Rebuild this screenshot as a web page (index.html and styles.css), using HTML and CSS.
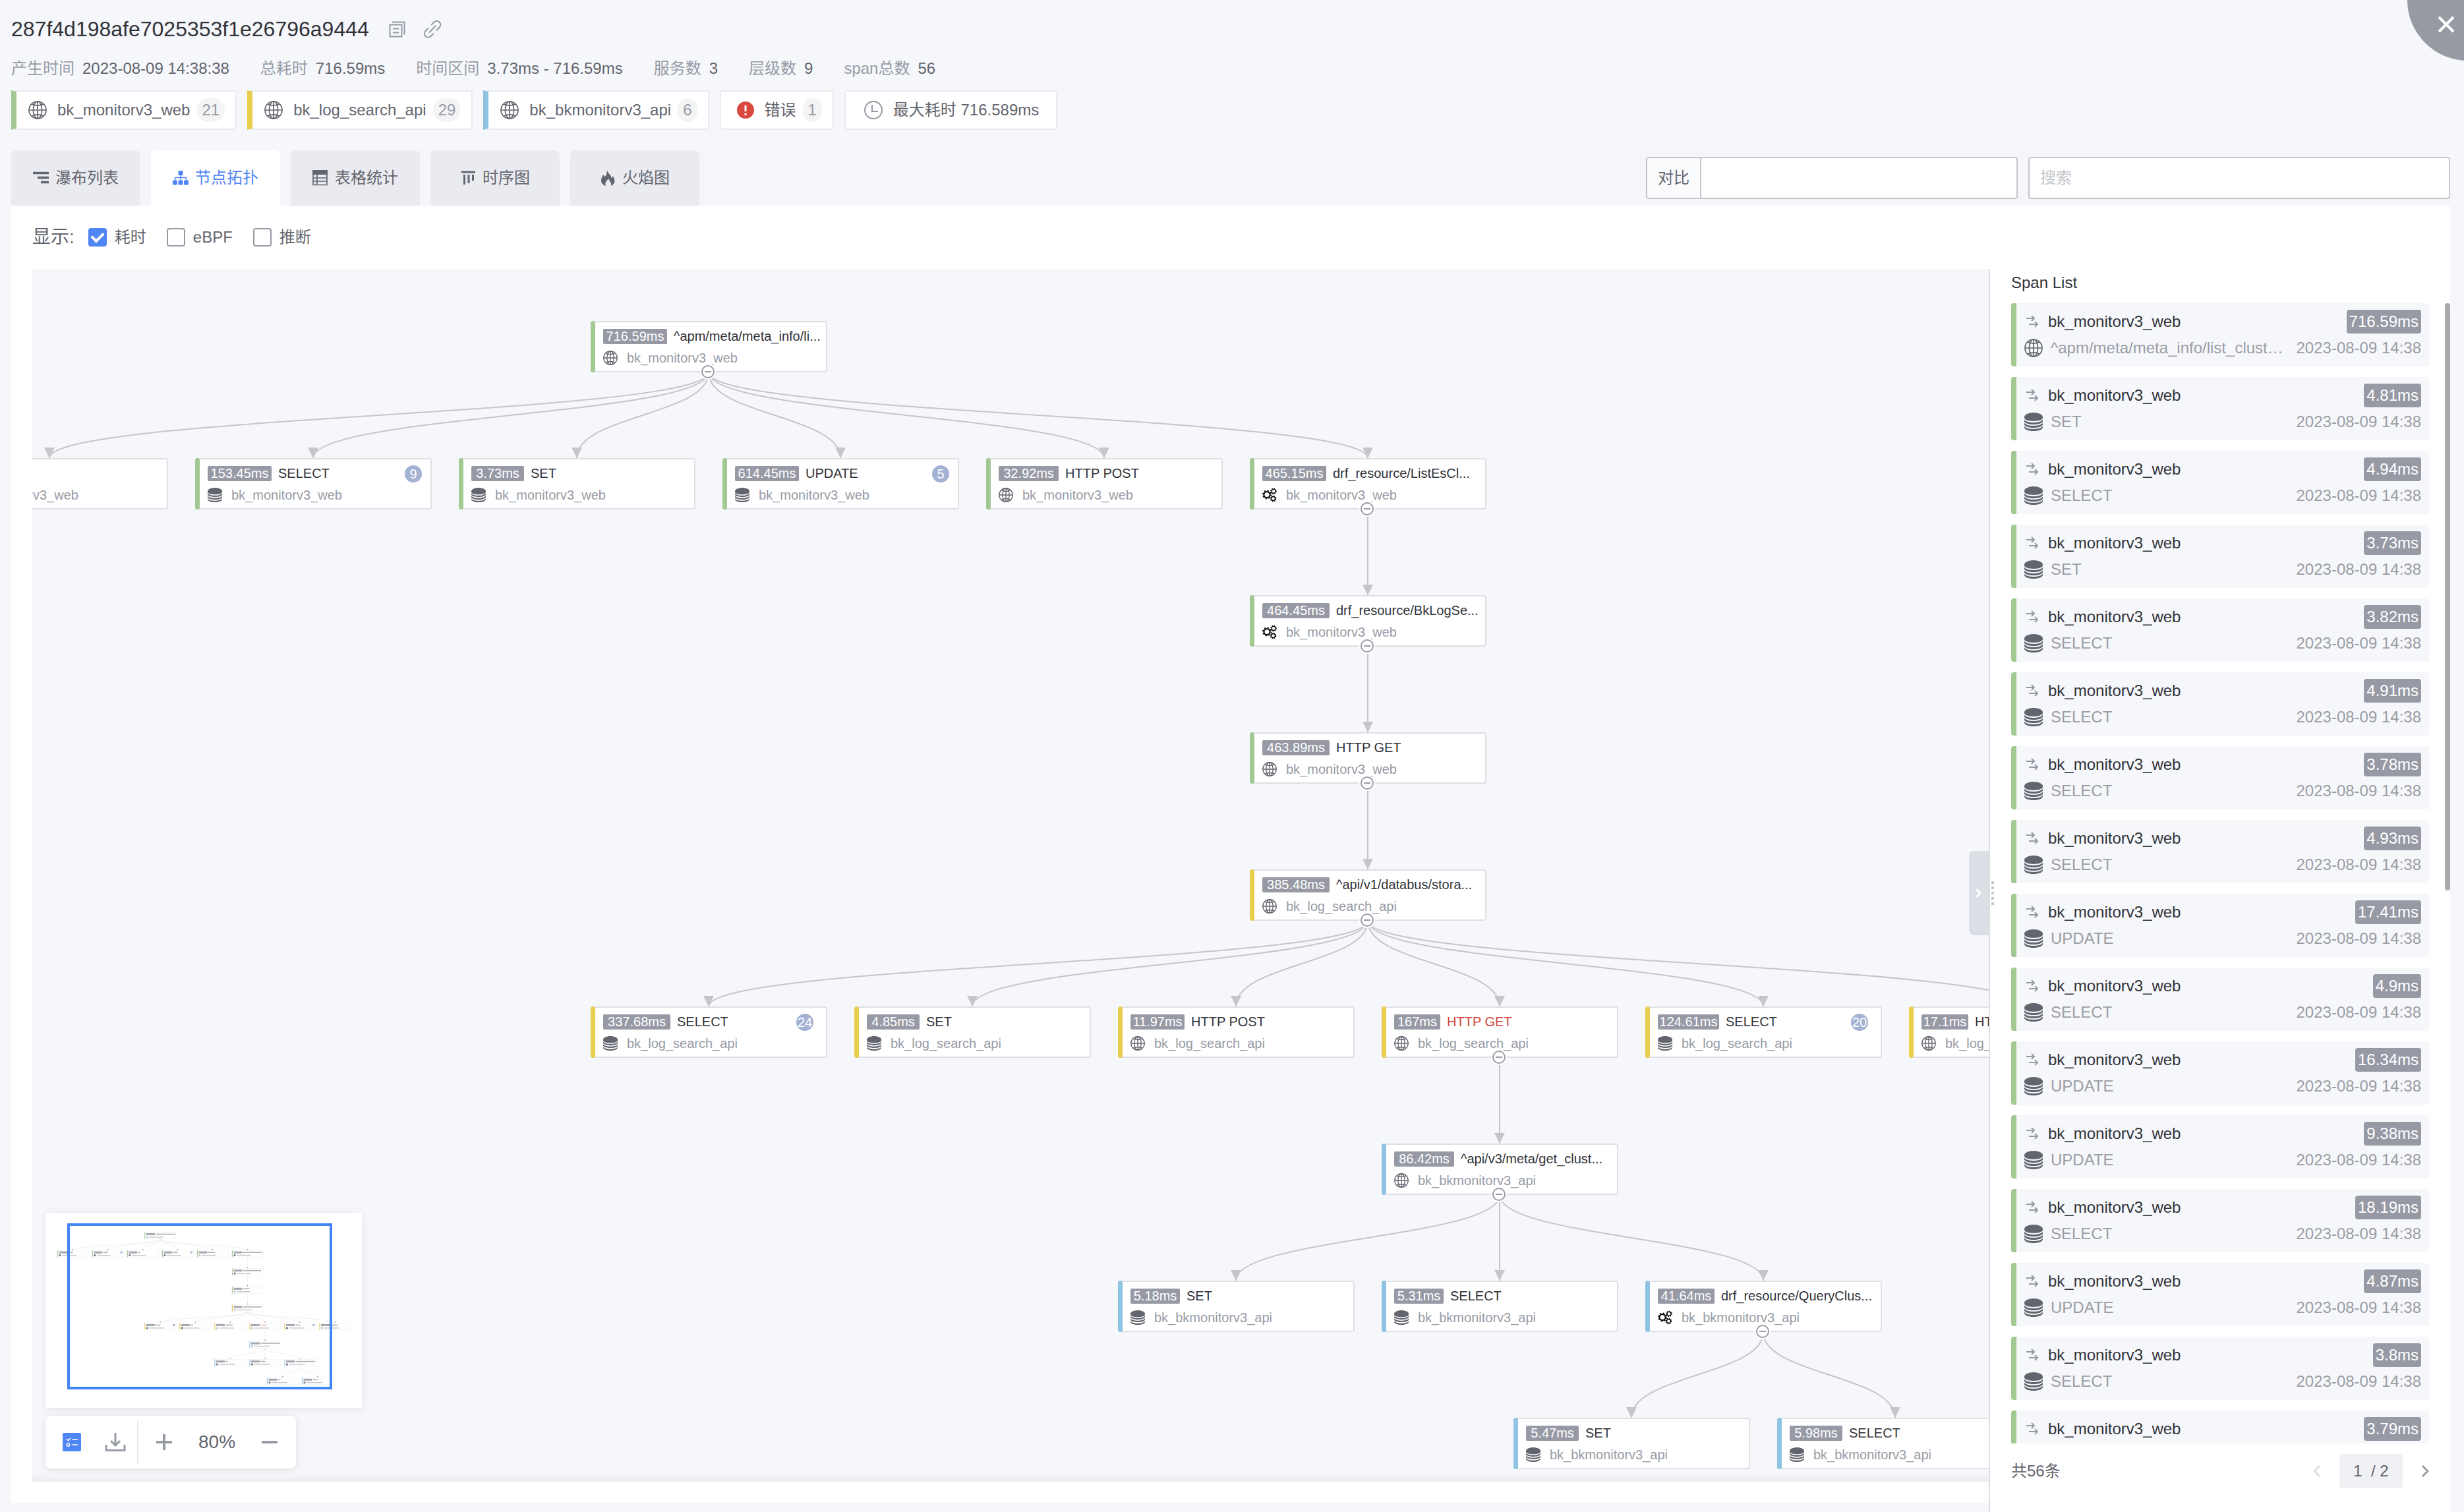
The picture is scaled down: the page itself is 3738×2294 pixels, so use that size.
FILE: index.html
```html
<!DOCTYPE html>
<html lang="zh-CN">
<head>
<meta charset="utf-8">
<title>Trace 详情</title>
<link rel="stylesheet" href="styles.css">
</head>
<body>
<svg class="sprite" aria-hidden="true">
  <symbol id="i-globe" viewBox="0 0 28 28"><g fill="none" stroke="currentColor" stroke-width="1.700"><circle cx="14" cy="14" r="13"/><ellipse cx="14" cy="14" rx="6.600" ry="13"/><path d="M14 1v26M1 14h26M5 4.800c5 3 13 3 18 0M5 23.200c5-3 13-3 18 0"/></g></symbol>
  <symbol id="i-db" viewBox="0 0 28 28"><g fill="currentColor"><path d="M14 0C6.300 0 0 3 0 6.600v1.200c0 3.300 6.300 5.200 14 5.200s14-1.900 14-5.200V6.600C28 3 21.700 0 14 0z"/><path d="M0 10.400c2.600 3.400 8 4.600 14 4.600s11.400-1.200 14-4.600v3.400c-2.400 3-8 4.200-14 4.200S2.400 16.800 0 13.800z"/><path d="M0 15.600c2.600 3.400 8 4.400 14 4.400s11.400-1 14-4.400v3.200c-2.400 3-8 4.200-14 4.200S2.400 21.800 0 18.800z"/><path d="M0 20.600c2.600 3.400 8 4.400 14 4.400s11.400-1 14-4.400v1.600c0 3.400-6.300 5.800-14 5.800S0 25.600 0 22.200z"/></g></symbol>
  <symbol id="i-gears" viewBox="0 0 22 22"><g fill="none" stroke="#000"><circle cx="7" cy="10.500" r="4.600" stroke-width="2"/><circle cx="7" cy="10.500" r="6.200" stroke-width="1.600" stroke-dasharray="2.200 2.670"/><circle cx="17" cy="5.300" r="3" stroke-width="1.300"/><circle cx="17" cy="5.300" r="4.200" stroke-width="1.300" stroke-dasharray="1.600 1.699"/><circle cx="16.500" cy="16.500" r="3" stroke-width="1.300"/><circle cx="16.500" cy="16.500" r="4.200" stroke-width="1.300" stroke-dasharray="1.600 1.699"/></g></symbol>
  <symbol id="i-call" viewBox="0 0 18 20"><path d="M0 5h12M8 1l4 4-4 4M4 14h13M13 10l4 4-4 4" fill="none" stroke="currentColor" stroke-width="2"/></symbol>
</svg>

<div class="page">
  <button class="close" aria-label="关闭"><svg viewBox="0 0 26 26"><path d="M2 2l22 22M24 2L2 24" fill="none" stroke="#fff" stroke-width="4"/></svg></button>

  <header class="header">
    <div class="title-row">
      <h1>287f4d198afe7025353f1e26796a9444</h1>
      <button class="icon-btn" aria-label="复制"><svg viewBox="0 0 28 28" width="28" height="28"><path d="M8 3.500h18.500V22.500M4.500 7.500h18v18h-18zM9 13.500h9.500M9 19.500h9.500" fill="none" stroke="currentColor" stroke-width="2"/></svg></button>
      <button class="icon-btn" aria-label="链接"><svg viewBox="0 0 28 28" width="28" height="28"><path d="M12 8l4.500-4.500c2.400-2.400 5.600-2.400 8 0s2.400 5.600 0 8L20 16.500M16 20.500L11.500 25c-2.400 2.400-5.600 2.400-8 0s-2.400-5.600 0-8L8 12.500M9 19.500L19 9" fill="none" stroke="currentColor" stroke-width="2"/></svg></button>
    </div>
    <dl class="info">
      <div><dt>产生时间</dt><dd>2023-08-09 14:38:38</dd></div>
      <div><dt>总耗时</dt><dd>716.59ms</dd></div>
      <div><dt>时间区间</dt><dd>3.73ms - 716.59ms</dd></div>
      <div><dt>服务数</dt><dd>3</dd></div>
      <div><dt>层级数</dt><dd>9</dd></div>
      <div><dt>span总数</dt><dd>56</dd></div>
    </dl>
    <div class="chips">
      <button class="chip service green"><svg class="ico"><use href="#i-globe"/></svg>bk_monitorv3_web<span class="num">21</span></button>
      <button class="chip service yellow"><svg class="ico"><use href="#i-globe"/></svg>bk_log_search_api<span class="num">29</span></button>
      <button class="chip service blue"><svg class="ico"><use href="#i-globe"/></svg>bk_bkmonitorv3_api<span class="num">6</span></button>
      <button class="chip error"><svg viewBox="0 0 26 26" width="26" height="26"><circle cx="13" cy="13" r="13" fill="#d9473f"/><path d="M13 6v9M13 18v3" stroke="#fff" stroke-width="3"/></svg>错误<span class="num">1</span></button>
      <button class="chip longest"><svg class="clock" viewBox="0 0 28 28" width="28" height="28"><circle cx="14" cy="14" r="13" fill="none" stroke="currentColor" stroke-width="2"/><path d="M12 6v10h9" fill="none" stroke="currentColor" stroke-width="2"/></svg>最大耗时 716.589ms</button>
    </div>
  </header>

  <div class="tabbar">
    <nav class="tabs">
      <button class="tab"><svg viewBox="0 0 24 24" width="24" height="24"><path d="M0 4.500h24M7 11.500h17M12 18.500h12" stroke="currentColor" stroke-width="3.500"/></svg>瀑布列表</button>
      <button class="tab active"><svg viewBox="0 0 24 24" width="24" height="24"><g fill="currentColor"><rect x="8.500" y="1" width="7" height="7" rx="1.500"/><rect x="0" y="15.500" width="7" height="7" rx="1.500"/><rect x="8.500" y="15.500" width="7" height="7" rx="1.500"/><rect x="17" y="15.500" width="7" height="7" rx="1.500"/></g><path d="M12 8v8M3.500 16v-4.500h17V16" fill="none" stroke="currentColor" stroke-width="1.500"/></svg>节点拓扑</button>
      <button class="tab"><svg viewBox="0 0 24 24" width="24" height="24"><path d="M0 0h23v7H0z" fill="currentColor"/><path d="M1 6v16.500h21V6M1 12h21M1 17h21M7 6v16" fill="none" stroke="currentColor" stroke-width="1.700"/></svg>表格统计</button>
      <button class="tab"><svg viewBox="0 0 24 24" width="24" height="24"><path d="M2 3h21" stroke="currentColor" stroke-width="3"/><path d="M6.500 7v15M13 7v13M19.500 7v9" stroke="currentColor" stroke-width="3"/></svg>时序图</button>
      <button class="tab"><svg viewBox="0 0 24 24" width="24" height="24"><path d="M11 0c1 5 7 8 7 13l2-4c2 4 3 7 2 10-1 2-3 4-5 5 1-5-2-7-4-11-3 4-6 6-4 11-4-1-7-4-7-8 0-4 2-6 3-9l3 3c2-3 3-6 3-10z" fill="currentColor"/></svg>火焰图</button>
    </nav>
    <div class="tools">
      <div class="compare"><label for="cmp">对比</label><input id="cmp" type="text"></div>
      <input class="search" type="text" placeholder="搜索" aria-label="搜索">
    </div>
  </div>

  <main class="panel">
    <div class="filters">
      <span class="filters-title">显示:</span>
      <label><input type="checkbox" checked>耗时</label>
      <label><input type="checkbox">eBPF</label>
      <label><input type="checkbox">推断</label>
    </div>
    <div class="content">
      <section class="graph-col">
        <div class="canvas" id="canvas">
          <svg class="edges" id="edges"></svg>
          <button class="collapse" aria-label="收起"><svg viewBox="0 0 10 16" width="10" height="16"><path d="M1 2l6 6-6 6" fill="none" stroke="#fff" stroke-width="3"/></svg></button>
          <div class="overlay">
            <div class="minimap"><svg id="minimap" width="480" height="296"></svg></div>
            <div class="toolbar">
              <button aria-label="图例"><svg viewBox="0 0 28 28" width="28" height="28"><rect width="28" height="28" rx="2" fill="#5085f5"/><g fill="none" stroke="#fff" stroke-width="1.600"><path d="M6 9l2.500 2.500L12 8M14.500 10H23M14.500 18H23"/><circle cx="8.500" cy="18" r="2.200"/></g></svg></button>
              <button aria-label="下载"><svg viewBox="0 0 32 28" width="32" height="28"><path d="M2 18v8.500h28V18M16 0v18M9 12l7 7 7-7" fill="none" stroke="currentColor" stroke-width="3"/></svg></button>
              <span class="sep"></span>
              <button aria-label="放大"><svg viewBox="0 0 24 24" width="24" height="24"><path d="M0 12h24M12 0v24" stroke="currentColor" stroke-width="4"/></svg></button>
              <span class="zoom">80%</span>
              <button aria-label="缩小"><svg viewBox="0 0 24 24" width="24" height="24"><path d="M0 12h24" stroke="currentColor" stroke-width="4"/></svg></button>
            </div>
          </div>
        </div>
      </section>
      <aside class="side">
        <div class="grip"><i></i><i></i><i></i><i></i><i></i></div>
        <h2>Span List</h2>
        <div class="list-wrap">
          <ul class="list" id="spans"></ul>
          <div class="scrollbar"></div>
        </div>
        <footer class="pager">
          <span>共56条</span>
          <button class="prev" aria-label="上一页"><svg viewBox="0 0 12 20" width="12" height="20"><path d="M10 2L2 10l8 8" fill="none" stroke="currentColor" stroke-width="3"/></svg></button>
          <span class="current">1&nbsp; / 2</span>
          <button class="next" aria-label="下一页"><svg viewBox="0 0 12 20" width="12" height="20"><path d="M2 2l8 8-8 8" fill="none" stroke="currentColor" stroke-width="3"/></svg></button>
        </footer>
      </aside>
    </div>
  </main>
</div>
<script src="app.js"></script>
</body>
</html>
```
FILE: styles.css
```css
* { box-sizing: border-box; }
body {
  margin: 0;
  background: #f5f7fb;
  color: #63656e;
  font: 24px/36px "Liberation Sans", "Noto Sans CJK SC", sans-serif;
}
button {
  margin: 0;
  padding: 0;
  border: 0;
  background: none;
  color: inherit;
  font: inherit;
  cursor: pointer;
}
svg { display: block; flex: none; }
.sprite { position: absolute; width: 0; height: 0; }
.page {
  position: relative;
  display: flex;
  flex-direction: column;
  height: 100vh;
  overflow: hidden;
}
.green { --bar: #a3c992; }
.yellow { --bar: #e9cd4c; }
.blue { --bar: #8fc3e3; }

.close {
  position: absolute;
  top: -92px;
  right: -98px;
  width: 184px;
  height: 184px;
  border-radius: 50%;
  background: #979aa3;
}
.close svg { position: absolute; left: 46px; top: 116px; width: 26px; height: 26px; }

/* header */
.header { padding: 22px 17px 31px; }
.title-row { display: flex; align-items: center; gap: 27px; height: 44px; }
h1 { margin: 0; color: #313238; font-size: 32px; font-weight: 400; line-height: 44px; }
.icon-btn { color: #979ba5; }
.info { display: flex; gap: 47px; margin: 20px 0 15px; }
.info div { display: flex; gap: 12px; }
.info dt { color: #979ba5; }
.info dd { margin: 0; }
.chips { display: flex; gap: 16px; }
.chip {
  display: flex;
  align-items: center;
  height: 60px;
  padding: 0 16px 0 24px;
  border: 2px solid #eaebf0;
  border-radius: 4px;
  background: #fff;
}
.chip.service { padding: 0 16px 0 18px; border-left: 8px solid var(--bar); border-radius: 0 4px 4px 0; }
.chip svg { margin-right: 16px; }
.chip.longest { padding: 0 26px 0 28px; }
.clock { color: #979ba5; }
.ico { width: 28px; height: 28px; }
.num {
  margin-left: 10px;
  padding: 0 8px;
  border-radius: 18px;
  background: #f4f4f5;
  color: #979ba5;
}

/* tabs */
.tabbar {
  display: flex;
  justify-content: space-between;
  align-items: center;
  margin: 0 21px 0 17px;
  background: #f4f6fa;
}
.tabs { display: flex; gap: 16px; }
.tab {
  display: flex;
  justify-content: center;
  align-items: center;
  gap: 10px;
  width: 196px;
  height: 84px;
  border-radius: 8px 8px 0 0;
  background: #eaebf0;
}
.tab.active { background: #fff; color: #5085f5; }
.tools { display: flex; gap: 16px; }
.compare, .search {
  height: 64px;
  border: 2px solid #c4c6cc;
  border-radius: 4px;
  background: #fff;
}
.compare { display: flex; width: 564px; overflow: hidden; }
.compare label {
  padding: 0 16px;
  border-right: 2px solid #c4c6cc;
  background: #fafbfd;
  line-height: 60px;
}
.compare input { flex: 1; min-width: 0; border: 0; outline: 0; font: inherit; }
.search { width: 640px; padding: 0 16px; font: inherit; }
.search::placeholder { color: #c4c6cc; }

/* body */
.panel { display: flex; flex-direction: column; flex: 1; min-height: 0; margin: 0 21px 0 17px; }
.filters {
  display: flex;
  align-items: center;
  gap: 31px;
  height: 96px;
  padding-left: 32px;
  background: #fff;
}
.filters-title { margin-right: -10px; font-size: 28px; }
.filters label { display: flex; align-items: center; gap: 12px; }
.filters input {
  display: grid;
  place-items: center;
  width: 28px;
  height: 28px;
  margin: 0;
  border: 2px solid #979ba5;
  border-radius: 4px;
  background: #fff;
  appearance: none;
}
.filters input:checked { border-color: #5085f5; background: #5085f5; }
.filters input:checked::after {
  width: 8px;
  height: 14px;
  margin-bottom: 4px;
  border: solid #fff;
  border-width: 0 4px 4px 0;
  content: "";
  transform: rotate(45deg);
}
.content { display: flex; flex: 1; min-height: 0; }
.graph-col { display: flex; flex: 1; min-width: 0; margin-bottom: 14px; padding: 0 0 32px 32px; background: #fff; }
.canvas {
  position: relative;
  flex: 1;
  overflow: hidden;
  background: #f5f7fb;
  box-shadow: inset 0 -14px 14px -12px rgba(0, 0, 0, .08);
}
.edges { position: absolute; inset: 0; width: 100%; height: 100%; }
.edges path, .mini-edge { fill: none; stroke: #c4c6cc; stroke-width: 2; }
.edges polygon { fill: #c4c6cc; }

.node {
  position: absolute;
  width: 359px;
  height: 78px;
  padding: 10px 13px 0 17px;
  border: 2px solid #dfe0e6;
  border-radius: 4px;
  background: #fff;
  font-size: 20px;
  line-height: 23px;
  white-space: nowrap;
}
.node::before {
  position: absolute;
  inset: -2px auto -2px -2px;
  width: 7px;
  border-radius: 4px;
  background: var(--bar);
  content: "";
}
.node-head { display: flex; height: 23px; }
.node-time { flex: none; border-radius: 2px; background: #979aa5; color: #fff; text-align: center; }
.node-name { margin-left: 10px; color: #313238; }
.node-name.err { color: #d0463c; }
.node-count {
  width: 26px;
  height: 26px;
  margin: -1px 0 0 auto;
  border-radius: 50%;
  background: #a3b1d3;
  color: #fff;
  line-height: 26px;
  text-align: center;
}
.node-count.wide { margin-right: 6px; }
.node-svc { display: flex; align-items: center; gap: 14px; height: 22px; margin-top: 10px; color: #979ba5; }
.node-svc svg { width: 22px; height: 22px; color: #63656e; }
.fold {
  position: absolute;
  left: 166px;
  bottom: -11px;
  width: 20px;
  height: 20px;
  border: 2px solid #979ba5;
  border-radius: 50%;
  background: #fff;
  box-shadow: 0 0 0 2px #fff;
}
.fold::after { position: absolute; left: 3px; top: 7px; width: 10px; height: 2px; background: #979ba5; content: ""; }

.collapse {
  position: absolute;
  right: 0;
  top: 883px;
  display: grid;
  place-items: center;
  width: 30px;
  height: 128px;
  border-radius: 8px 0 0 8px;
  background: #dcdee5;
}
.overlay { position: absolute; left: 20px; bottom: 20px; display: grid; justify-items: start; gap: 12px; }
.minimap { background: #fff; box-shadow: 0 2px 12px rgba(0, 0, 0, .08); }
.toolbar {
  display: flex;
  align-items: center;
  gap: 36px;
  height: 80px;
  padding: 0 28px 0 26px;
  border-radius: 8px;
  background: #fff;
  box-shadow: 0 2px 12px rgba(0, 0, 0, .1);
}
.toolbar button { color: #979ba5; }
.sep { width: 2px; height: 64px; margin: 0 -9px 0 -19px; background: #e4e5eb; }
.zoom { margin: 0 4px; font-size: 28px; }

/* span list */
.side { position: relative; display: flex; flex-direction: column; width: 700px; border-left: 2px solid #dcdee5; background: #fff; }
.grip { position: absolute; left: 2px; top: 929px; display: grid; gap: 4px; }
.grip i { width: 4px; height: 4px; background: #c4c6cc; }
h2 { margin: 0 32px 10px; color: #313238; font-size: 24px; font-weight: 400; line-height: 42px; }
.list-wrap { position: relative; flex: 1; min-height: 0; overflow: hidden; }
.list { display: grid; gap: 16px; margin: 0 32px; padding: 0; list-style: none; }
.span {
  height: 96px;
  padding: 10px 12px 0;
  border-left: 8px solid var(--bar);
  border-radius: 4px;
  background: #f5f7fb;
}
.span-row { display: flex; align-items: center; white-space: nowrap; }
.span-row + .span-row { margin-top: 4px; color: #9b9da3; }
.call { width: 18px; height: 20px; margin: 0 15px 0 3px; color: #979ba5; }
.span-svc { color: #313238; }
.span-time { margin-left: auto; padding: 0 4px; border-radius: 4px; background: #979aa5; color: #fff; }
.span-row .ico { margin-right: 12px; color: #63656e; }
.span-op { flex: 1; min-width: 0; }
.scrollbar { position: absolute; right: 0; top: 0; width: 8px; height: 891px; border-radius: 4px; background: #a9a9ab; }
.pager { display: flex; align-items: center; height: 104px; padding: 0 32px 20px; }
.prev { margin-left: auto; color: #dcdee5; }
.next { color: #979ba5; }
.current {
  width: 96px;
  height: 52px;
  margin: 0 28px;
  border-radius: 4px;
  background: #f0f1f5;
  line-height: 52px;
  text-align: center;
}
```
FILE: app.js
```js
// Call tree. x/y are canvas coordinates, p is the index of the parent node.
const WEB = 'bk_monitorv3_web', LOG = 'bk_log_search_api', BK = 'bk_bkmonitorv3_api';
const nodes = [
  { x: 847, y: 79, svc: WEB, t: '716.59ms', name: '^apm/meta/meta_info/li...', icon: 'globe', fold: 1 },
  { x: -153, y: 287, p: 0, svc: WEB, t: '', name: '', icon: 'db' },
  { x: 247, y: 287, p: 0, svc: WEB, t: '153.45ms', name: 'SELECT', icon: 'db', n: 9 },
  { x: 647, y: 287, p: 0, svc: WEB, t: '3.73ms', name: 'SET', icon: 'db' },
  { x: 1047, y: 287, p: 0, svc: WEB, t: '614.45ms', name: 'UPDATE', icon: 'db', n: 5 },
  { x: 1447, y: 287, p: 0, svc: WEB, t: '32.92ms', name: 'HTTP POST', icon: 'globe' },
  { x: 1847, y: 287, p: 0, svc: WEB, t: '465.15ms', name: 'drf_resource/ListEsCl...', icon: 'gears', fold: 1 },
  { x: 1847, y: 495, p: 6, svc: WEB, t: '464.45ms', name: 'drf_resource/BkLogSe...', icon: 'gears', fold: 1 },
  { x: 1847, y: 703, p: 7, svc: WEB, t: '463.89ms', name: 'HTTP GET', icon: 'globe', fold: 1 },
  { x: 1847, y: 911, p: 8, svc: LOG, t: '385.48ms', name: '^api/v1/databus/stora...', icon: 'globe', fold: 1 },
  { x: 847, y: 1119, p: 9, svc: LOG, t: '337.68ms', name: 'SELECT', icon: 'db', n: 24 },
  { x: 1247, y: 1119, p: 9, svc: LOG, t: '4.85ms', name: 'SET', icon: 'db' },
  { x: 1647, y: 1119, p: 9, svc: LOG, t: '11.97ms', name: 'HTTP POST', icon: 'globe' },
  { x: 2047, y: 1119, p: 9, svc: LOG, t: '167ms', name: 'HTTP GET', icon: 'globe', fold: 1, err: 1 },
  { x: 2447, y: 1119, p: 9, svc: LOG, t: '124.61ms', name: 'SELECT', icon: 'db', n: 20 },
  { x: 2847, y: 1119, p: 9, svc: LOG, t: '17.1ms', name: 'HTTP POST', icon: 'globe' },
  { x: 2047, y: 1327, p: 13, svc: BK, t: '86.42ms', name: '^api/v3/meta/get_clust...', icon: 'globe', fold: 1 },
  { x: 1647, y: 1535, p: 16, svc: BK, t: '5.18ms', name: 'SET', icon: 'db' },
  { x: 2047, y: 1535, p: 16, svc: BK, t: '5.31ms', name: 'SELECT', icon: 'db' },
  { x: 2447, y: 1535, p: 16, svc: BK, t: '41.64ms', name: 'drf_resource/QueryClus...', icon: 'gears', fold: 1 },
  { x: 2247, y: 1743, p: 19, svc: BK, t: '5.47ms', name: 'SET', icon: 'db' },
  { x: 2647, y: 1743, p: 19, svc: BK, t: '5.98ms', name: 'SELECT', icon: 'db' }
];
const tone = { [WEB]: 'green', [LOG]: 'yellow', [BK]: 'blue' };
const fill = { [WEB]: '#a3c992', [LOG]: '#e9cd4c', [BK]: '#8fc3e3' };
const W = 359, H = 78;
const icon = (name, cls = '') => `<svg class="${cls}"><use href="#i-${name}"/></svg>`;

const badgeWidth = t => {
  const count = re => (t.match(re) || []).length;
  return Math.round(count(/\d/g) * 11.1 + count(/\./g) * 5.6 + 26.7 + 14 - count(/1/g) * 4.5);
};

let edges = '', cards = '', mini = '';
for (const n of nodes) {
  if (n.p !== undefined) {
    const a = nodes[n.p];
    const sx = a.x + 179, sy = a.y + H, ex = n.x + 179, ey = n.y, my = (sy + ey) / 2;
    const d = `M${sx} ${sy}C${sx} ${my} ${ex} ${my} ${ex} ${ey}`;
    const head = `${ex - 8},${ey - 16} ${ex + 8},${ey - 16} ${ex},${ey}`;
    edges += `<path d="${d}"/><polygon points="${head}"/>`;
    mini += `<path class="mini-edge" d="${d}"/><polygon points="${head}" fill="#979ba5"/>`;
  }
  cards += `<div class="node ${tone[n.svc]}" style="left:${n.x}px;top:${n.y}px">
    <div class="node-head">${n.t ? `<span class="node-time" style="width:${badgeWidth(n.t)}px">${n.t}</span>` : ''}
      <span class="node-name${n.err ? ' err' : ''}">${n.name}</span>
      ${n.n ? `<span class="node-count${n.n > 9 ? ' wide' : ''}">${n.n}</span>` : ''}</div>
    <div class="node-svc">${icon(n.icon)}<span>${n.svc}</span></div>
    ${n.fold ? '<i class="fold"></i>' : ''}</div>`;
  const nameW = (n.name || 'SELECT').length * 9;
  mini += `<g transform="translate(${n.x} ${n.y})">
    <rect width="${W}" height="${H}" fill="#fff" stroke="#e6e7ec" stroke-width="3"/>
    <rect width="8" height="${H}" fill="${fill[n.svc]}"/>
    <rect x="19" y="12" width="98" height="23" fill="#a6a8b1"/>
    <rect x="127" y="17" width="${nameW}" height="12" fill="${n.err ? '#e89a94' : '#8a8b90'}" opacity=".7"/>
    <rect x="20" y="46" width="21" height="21" fill="#63656e" opacity="${n.icon === 'globe' ? .4 : .9}"/>
    <rect x="55" y="51" width="${n.svc.length * 10}" height="11" fill="#b9bbc2" opacity=".8"/>
    ${n.n ? '<circle cx="334" cy="23" r="13" fill="#a3b1d3"/>' : ''}</g>`;
}
document.getElementById('edges').innerHTML = edges;
document.getElementById('edges').insertAdjacentHTML('afterend', cards);
document.getElementById('minimap').innerHTML =
  `<g transform="translate(38 19) scale(.1326)">${mini}</g>
   <rect x="35" y="18" width="398" height="248" fill="none" stroke="#4484f3" stroke-width="4"/>`;

const spans = [
  ['716.59ms', '^apm/meta/meta_info/list_clust…'], ['4.81ms', 'SET'], ['4.94ms', 'SELECT'], ['3.73ms', 'SET'],
  ['3.82ms', 'SELECT'], ['4.91ms', 'SELECT'], ['3.78ms', 'SELECT'], ['4.93ms', 'SELECT'],
  ['17.41ms', 'UPDATE'], ['4.9ms', 'SELECT'], ['16.34ms', 'UPDATE'], ['9.38ms', 'UPDATE'],
  ['18.19ms', 'SELECT'], ['4.87ms', 'UPDATE'], ['3.8ms', 'SELECT'], ['3.79ms', '']
];
document.getElementById('spans').innerHTML = spans.map(([t, op], i) => `<li class="span green">
  <div class="span-row">${icon('call', 'call')}<span class="span-svc">${WEB}</span><span class="span-time">${t}</span></div>
  ${op ? `<div class="span-row">${icon(i ? 'db' : 'globe', 'ico')}<span class="span-op">${op}</span><time>2023-08-09 14:38</time></div>` : ''}
</li>`).join('');
```
